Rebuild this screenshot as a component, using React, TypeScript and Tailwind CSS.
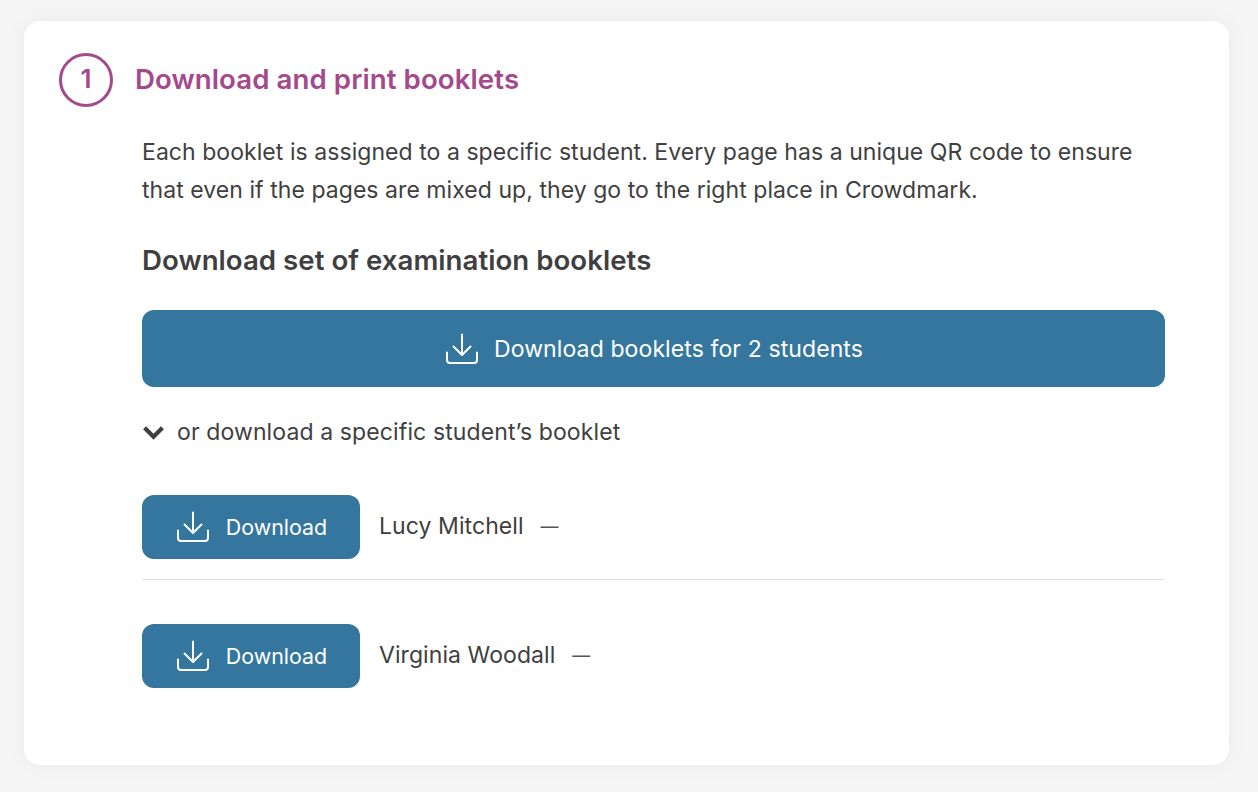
const DownloadIcon = ({ className }: { className: string }) => (
  <svg viewBox="0 0 32 32" fill="none" stroke="currentColor" strokeWidth="2" strokeLinecap="round" strokeLinejoin="round" className={className}>
    <path d="M16 1.500v20" />
    <path d="M7.500 13.500l8.500 8.500 8.500-8.500" />
    <path d="M1 19.500v7.500a3 3 0 0 0 3 3h24a3 3 0 0 0 3-3v-7.500" />
  </svg>
);

const students = ["Lucy Mitchell", "Virginia Woodall"];

export default function App() {
  return (
    <div className="min-h-screen bg-[#f5f5f5] pt-[21px] pl-6 pr-[29px] font-['Inter',sans-serif] text-[#3f3f41]">
      <div className="h-[744px] rounded-2xl bg-white pt-8 pl-[35px] pr-16 shadow-[0_0_20px_rgba(0,0,0,0.05)]">
        <div className="flex items-center gap-[22px]">
          <div className="flex h-[54px] w-[54px] items-center justify-center rounded-full border-[3px] border-[#a4498b] pb-1 text-[26px] font-semibold text-[#a4498b]">
            1
          </div>
          <h1 className="text-[27.648px] tracking-[0.08px] font-semibold text-[#a4498b]">Download and print booklets</h1>
        </div>

        <div className="ml-[83px]">
          <p className="mt-[27px] text-[23.04px] leading-[37.5px] tracking-[0.04px]">
            Each booklet is assigned to a specific student. Every page has a unique QR code to ensure that even if the pages are mixed up, they go to the right place in Crowdmark.
          </p>
          <h2 className="mt-[33px] text-[27.648px] leading-9 tracking-[0.03px] font-semibold">Download set of examination booklets</h2>

          <button className="mt-8 flex h-[77px] w-full items-center justify-center gap-4 rounded-xl bg-[#35769e] pl-0.5 text-[23.04px] tracking-[0.09px] text-white">
            <DownloadIcon className="h-8 w-8" />
            <span className="mt-0.5">Download booklets for 2 students</span>
          </button>

          <div className="mt-[27px] flex h-9 items-center gap-3 text-[23.04px] tracking-[0.1px]">
            <svg viewBox="0 0 24 16" fill="none" stroke="currentColor" strokeWidth="4.5" strokeLinejoin="miter" className="h-[15px] w-[23px]">
              <path d="M2.500 3l9.500 9.500L21.500 3" />
            </svg>
            or download a specific student’s booklet
          </div>

          <div className="mt-[45px]">
            {students.map((name, i) => (
              <div key={name} className={i === 0 ? "border-b border-[#dedee0] pb-5" : "mt-11"}>
                <div className="flex items-center gap-[19px] text-[23.04px] tracking-[0.06px]">
                  <button className="flex h-16 w-[218px] items-center justify-center gap-[17px] rounded-xl bg-[#35769e] pl-0.5 text-[21.4px] tracking-normal text-white">
                    <DownloadIcon className="h-8 w-8" />
                    Download
                  </button>
                  <span className="mb-0.5">{name}</span>
                  <span className="mb-0.5 -ml-0.5 text-[18px] text-[#55555a]">—</span>
                </div>
              </div>
            ))}
          </div>
        </div>
      </div>
    </div>
  );
}
